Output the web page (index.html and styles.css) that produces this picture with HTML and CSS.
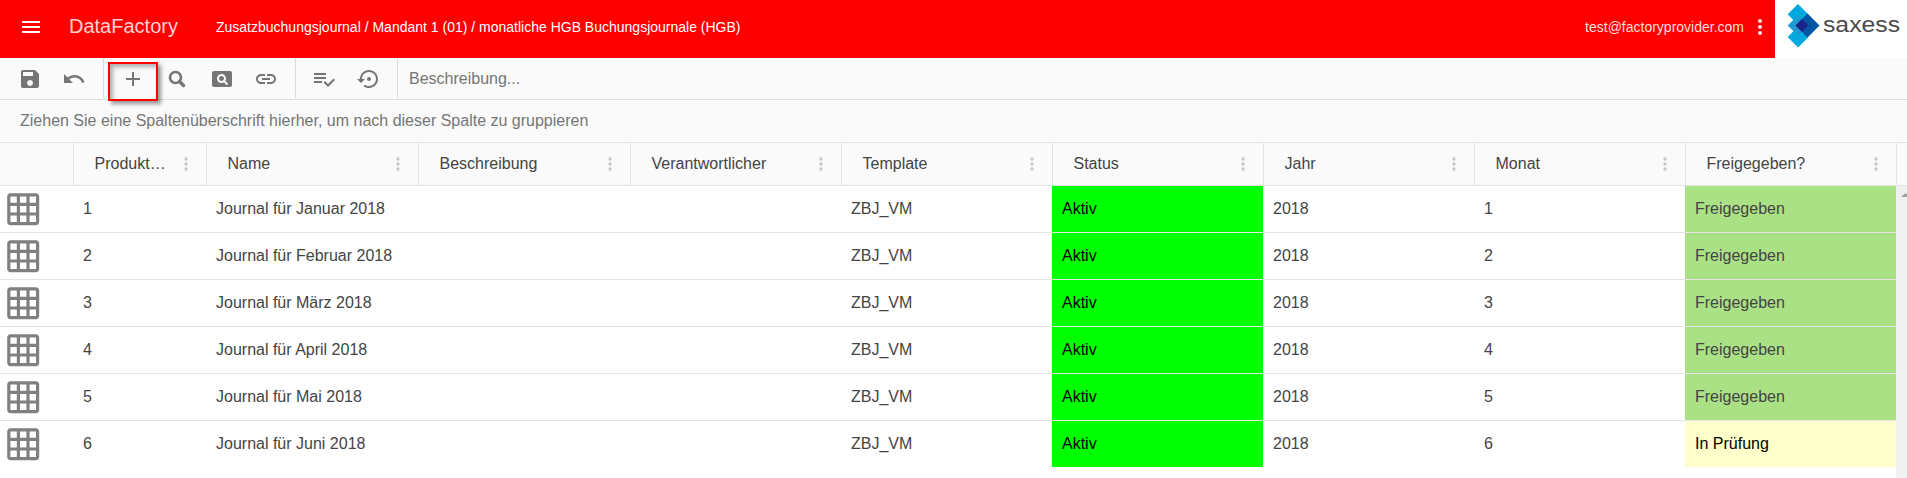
FILE: index.html
```html
<!DOCTYPE html>
<html lang="de">
<head>
<meta charset="utf-8">
<title>DataFactory</title>
<link rel="stylesheet" href="styles.css">
</head>
<body>
<svg class="defs" width="0" height="0">
  <symbol id="grid" viewBox="0 0 24 24"><path d="M20 2H4c-1.100 0-2 .9-2 2v16c0 1.100.9 2 2 2h16c1.100 0 2-.9 2-2V4c0-1.100-.9-2-2-2zM8 20H4v-4h4v4zm0-6H4v-4h4v4zm0-6H4V4h4v4zm6 12h-4v-4h4v4zm0-6h-4v-4h4v4zm0-6h-4V4h4v4zm6 12h-4v-4h4v4zm0-6h-4v-4h4v4zm0-6h-4V4h4v4z"/></symbol>
  <symbol id="dots" viewBox="0 0 4 14"><circle cx="2" cy="2" r="1.700"/><circle cx="2" cy="7" r="1.700"/><circle cx="2" cy="12" r="1.700"/></symbol>
</svg>
<header class="appbar">
  <svg class="menu" viewBox="0 0 18 12"><path d="M0 0h18v2H0zM0 5h18v2H0zM0 10h18v2H0z"/></svg>
  <span class="brand">DataFactory</span>
  <span class="crumbs">Zusatzbuchungsjournal / Mandant 1 (01) / monatliche HGB Buchungsjournale (HGB)</span>
  <span class="user">test@factoryprovider.com</span>
  <svg class="more" viewBox="0 0 24 24"><path d="M12 8c1.100 0 2-.9 2-2s-.9-2-2-2-2 .9-2 2 .9 2 2 2zm0 2c-1.100 0-2 .9-2 2s.9 2 2 2 2-.9 2-2-.9-2-2-2zm0 6c-1.100 0-2 .9-2 2s.9 2 2 2 2-.9 2-2-.9-2-2-2z"/></svg>
  <div class="logo">
    <svg width="132" height="58" viewBox="0 0 132 58">
      <path fill="#00aadf" d="M23 4l10.500 10.500L23 25 12.700 14.300zM23 26.500L33.500 37 23 47.500 12.700 37z"/>
      <path fill="#1b9bd2" d="M23 15.200l10.300 10.300L23 35.800 12.700 25.500z"/>
      <path fill="#0055a5" d="M32.500 13.500l12 12-12 12-12-12z"/>
      <path fill="#1b2486" d="M26.900 19.200l6.300 6.300-6.300 6.300-6.300-6.300z"/>
      <text x="48" y="32" textLength="77" lengthAdjust="spacingAndGlyphs" class="logo-text">saxess</text>
    </svg>
  </div>
</header>
<nav class="toolbar">
  <div class="group g1">
    <svg viewBox="0 0 24 24"><path d="M17 3H5c-1.110 0-2 .9-2 2v14c0 1.100.89 2 2 2h14c1.100 0 2-.9 2-2V7l-4-4zm-5 16c-1.660 0-3-1.340-3-3s1.340-3 3-3 3 1.340 3 3-1.340 3-3 3zm3-10H5V5h10v4z"/></svg>
    <svg viewBox="0 0 24 24"><path d="M12.500 8c-2.650 0-5.050.99-6.900 2.600L2 7v9h9l-3.620-3.620c1.390-1.160 3.160-1.880 5.120-1.880 3.540 0 6.550 2.310 7.600 5.500l2.370-.78C21.080 11.030 17.150 8 12.500 8z"/></svg>
  </div>
  <div class="group g2">
    <span class="add"><svg viewBox="0 0 24 24"><path d="M19 13h-6v6h-2v-6H5v-2h6V5h2v6h6v2z"/></svg></span>
    <svg viewBox="0 0 24 24"><circle cx="10.500" cy="10.500" r="5.500" fill="none" stroke="#757575" stroke-width="2.600"/><path d="M14.500 14.500l4 4" stroke="#757575" stroke-width="3.400" stroke-linecap="round"/></svg>
    <svg viewBox="0 0 24 24"><path d="M11.500 9C10.120 9 9 10.120 9 11.500s1.120 2.500 2.500 2.500 2.500-1.120 2.500-2.500S12.880 9 11.500 9zM20 4H4c-1.100 0-2 .9-2 2v12c0 1.100.9 2 2 2h16c1.100 0 2-.9 2-2V6c0-1.100-.9-2-2-2zm-3.210 14.210l-2.910-2.910c-.69.440-1.510.7-2.390.7C9.010 16 7 13.990 7 11.500S9.010 7 11.500 7 16 9.010 16 11.500c0 .88-.26 1.690-.7 2.390l2.910 2.900-1.420 1.420z"/></svg>
    <svg viewBox="0 0 24 24"><path d="M3.900 12c0-1.710 1.390-3.100 3.100-3.100h4V7H7c-2.760 0-5 2.240-5 5s2.240 5 5 5h4v-1.900H7c-1.710 0-3.100-1.390-3.100-3.100zM8 13h8v-2H8v2zm9-6h-4v1.900h4c1.710 0 3.100 1.390 3.100 3.100s-1.390 3.100-3.100 3.100h-4V17h4c2.760 0 5-2.240 5-5s-2.240-5-5-5z"/></svg>
  </div>
  <div class="group g3">
    <svg viewBox="0 0 24 24"><path d="M14 10H2v2h12v-2zm0-4H2v2h12V6zM2 16h8v-2H2v2zm19.500-4.500L23 13l-6.990 7-4.510-4.500L13 14l3.010 3 5.490-5.500z"/></svg>
    <svg viewBox="0 0 24 24"><path d="M14 12c0-1.100-.9-2-2-2s-2 .9-2 2 .9 2 2 2 2-.9 2-2zm-2-9c-4.970 0-9 4.030-9 9H0l4 4 4-4H5c0-3.870 3.130-7 7-7s7 3.130 7 7-3.130 7-7 7c-1.510 0-2.910-.49-4.060-1.300l-1.420 1.440C8.040 20.300 9.940 21 12 21c4.970 0 9-4.030 9-9s-4.030-9-9-9z"/></svg>
  </div>
  <span class="desc">Beschreibung...</span>
</nav>
<div class="grouping">Ziehen Sie eine Spaltenüberschrift hierher, um nach dieser Spalte zu gruppieren</div>
<div class="row head">
  <div></div>
  <div><span>Produkt…</span><svg><use href="#dots"/></svg></div>
  <div><span>Name</span><svg><use href="#dots"/></svg></div>
  <div><span>Beschreibung</span><svg><use href="#dots"/></svg></div>
  <div><span>Verantwortlicher</span><svg><use href="#dots"/></svg></div>
  <div><span>Template</span><svg><use href="#dots"/></svg></div>
  <div><span>Status</span><svg><use href="#dots"/></svg></div>
  <div><span>Jahr</span><svg><use href="#dots"/></svg></div>
  <div><span>Monat</span><svg><use href="#dots"/></svg></div>
  <div><span>Freigegeben?</span><svg><use href="#dots"/></svg></div>
  <div></div>
</div>
<main class="content">
  <div class="rows">
    <div class="row"><div class="ic"><svg><use href="#grid"/></svg></div><div>1</div><div>Journal für Januar 2018</div><div></div><div></div><div>ZBJ_VM</div><div class="active">Aktiv</div><div>2018</div><div>1</div><div class="ok">Freigegeben</div></div>
    <div class="row"><div class="ic"><svg><use href="#grid"/></svg></div><div>2</div><div>Journal für Februar 2018</div><div></div><div></div><div>ZBJ_VM</div><div class="active">Aktiv</div><div>2018</div><div>2</div><div class="ok">Freigegeben</div></div>
    <div class="row"><div class="ic"><svg><use href="#grid"/></svg></div><div>3</div><div>Journal für März 2018</div><div></div><div></div><div>ZBJ_VM</div><div class="active">Aktiv</div><div>2018</div><div>3</div><div class="ok">Freigegeben</div></div>
    <div class="row"><div class="ic"><svg><use href="#grid"/></svg></div><div>4</div><div>Journal für April 2018</div><div></div><div></div><div>ZBJ_VM</div><div class="active">Aktiv</div><div>2018</div><div>4</div><div class="ok">Freigegeben</div></div>
    <div class="row"><div class="ic"><svg><use href="#grid"/></svg></div><div>5</div><div>Journal für Mai 2018</div><div></div><div></div><div>ZBJ_VM</div><div class="active">Aktiv</div><div>2018</div><div>5</div><div class="ok">Freigegeben</div></div>
    <div class="row"><div class="ic"><svg><use href="#grid"/></svg></div><div>6</div><div>Journal für Juni 2018</div><div></div><div></div><div>ZBJ_VM</div><div class="active">Aktiv</div><div>2018</div><div>6</div><div class="review">In Prüfung</div></div>
  </div>
  <div class="scroll"><svg width="11" height="4" viewBox="0 0 11 4"><path d="M5 4l4.500-4L14 4z"/></svg></div>
</main>
</body>
</html>
```
FILE: styles.css
```css
* { box-sizing: border-box; }
body { margin: 0; height: 478px; overflow: hidden; display: flex; flex-direction: column; background: #fff; font: 16px/20px "Liberation Sans", Arial, sans-serif; color: #444; }
.defs { position: absolute; }
svg { display: block; flex: none; }

.appbar { height: 58px; flex: none; display: flex; align-items: center; background: #f00; color: #fff; white-space: nowrap; }
.menu { width: 18px; height: 12px; margin-left: 22px; margin-top: -4px; fill: #fff; }
.brand { width: 147px; margin-left: 29px; margin-top: -6px; font-size: 20px; line-height: 24px; color: #ffd2d2; }
.crumbs { font-size: 14px; margin-top: -4px; }
.user { margin-left: auto; font-size: 14px; margin-top: -4px; color: #ffdede; }
.more { width: 24px; height: 24px; margin: -4px 3px 0 4px; fill: #ffe6e6; }
.logo { width: 132px; height: 58px; background: #fff; }
.logo-text { font-size: 22.500px; fill: #4a4a4c; }

.toolbar { height: 42px; flex: none; display: flex; align-items: flex-start; background: #fafafa; border-bottom: 1px solid #ddd; }
.group { height: 40px; display: flex; align-items: center; padding-top: 2px; border-right: 1px solid #ddd; }
.group svg { width: 24px; height: 24px; fill: #757575; }
.g1 { width: 104px; padding-left: 18px; gap: 20px; }
.g2 { width: 192px; padding-left: 4px; gap: 20px; }
.g2 svg:nth-child(2) { margin-left: -13px; }
.g2 svg:nth-child(3) { margin-left: 1px; }
.g3 { width: 102px; padding-left: 16px; gap: 21px; }
.add { width: 50px; height: 39px; margin-top: 2px; border: 2px solid #f00; padding: 3px 11px; box-shadow: 3px 3px 4px rgba(0,0,0,.4), inset 3px 3px 4px rgba(0,0,0,.3); align-self: flex-start; position: relative; z-index: 1; }
.desc { margin: 11px 0 0 11px; color: #757575; }

.grouping { height: 43px; flex: none; padding: 11px 0 0 20px; background: #fafafa; color: #757575; border-bottom: 1px solid #e4e4e4; }

.row { display: grid; grid-template-columns: 73px 133px 212px 212px 211px 211px 211px 211px 211px 211px; height: 47px; border-bottom: 1px solid #e4e4e4; }
.row > div { display: flex; align-items: center; padding-left: 10px; white-space: nowrap; }
.head { height: 43px; flex: none; grid-template-columns: 73px 133px 212px 212px 211px 211px 211px 211px 211px 211px 11px; background: #fafafa; }
.head > div { padding: 0 18px 0 20.500px; border-left: 1px solid #e4e4e4; justify-content: space-between; }
.head > div:first-child { border: 0; }
.head > div:last-child { padding: 0; }
.head svg { width: 4px; height: 14px; fill: #c8c8c8; }

.content { flex: 1; display: flex; }
.rows { width: 1896px; }
.rows .row:last-child { border-bottom: 0; height: 46px; }
.row > .ic { padding-left: 3.800px; }
.ic svg { width: 38.400px; height: 38.400px; fill: #808080; }
.row > .active { background: #0f0; color: #000; }
.row > .ok { background: #aae185; }
.row > .review { background: #ffc; color: #000; }
.scroll { flex: 1; padding-top: 7px; background: #f0f0f0; fill: #a0a0a0; }
```
